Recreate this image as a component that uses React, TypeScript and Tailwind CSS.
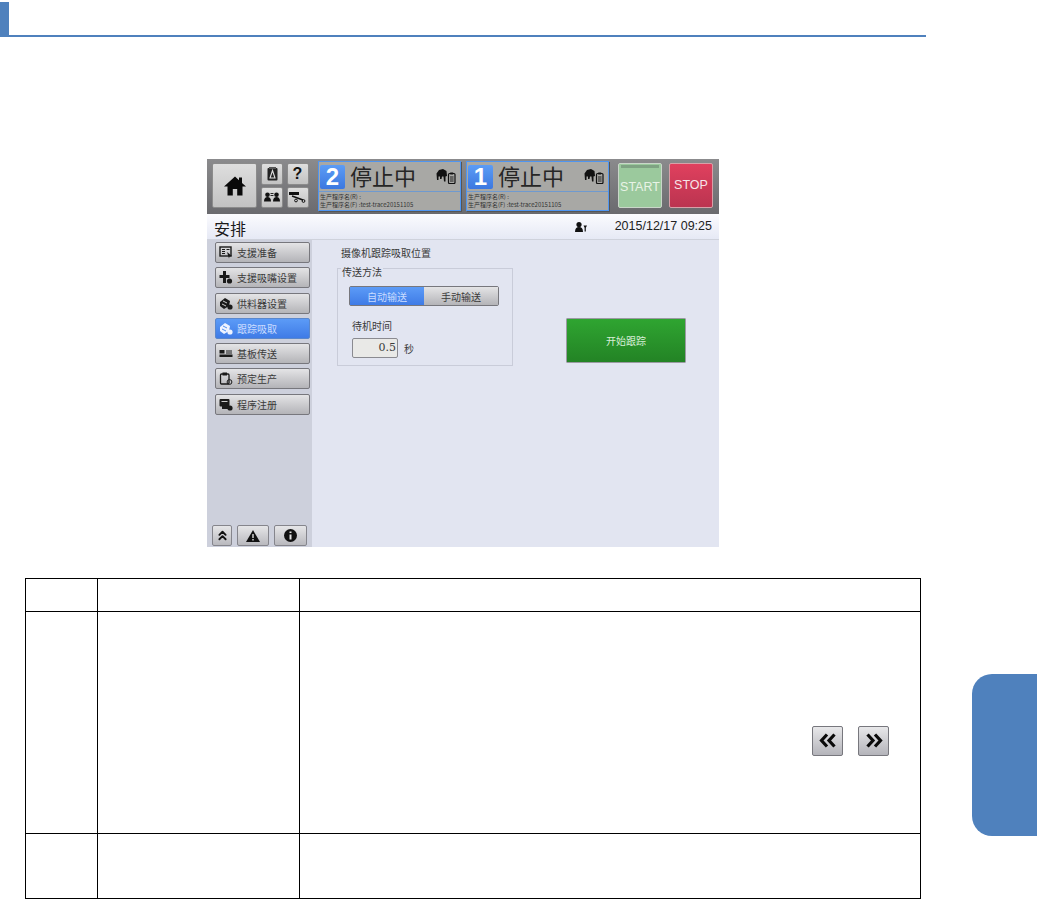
import React from "react";
import { ChevronsUp } from "lucide-react";

const cjk = "font-['Noto_Sans_CJK_SC','Noto_Sans',sans-serif]";

const HomeIcon = () => (
  <svg width="22" height="20" viewBox="0 0 22 20"><path d="M11 0.5 L15 4.2 L15 1.5 L18 1.5 L18 7 L22 10.5 L18.5 10.5 L18.5 19.5 L13.2 19.5 L13.2 13 L8.8 13 L8.8 19.5 L3.5 19.5 L3.5 10.5 L0 10.5 Z" fill="#0a0a0a" /></svg>
);

const MachineIcon = () => (
  <svg width="20" height="15" viewBox="0 0 20 15">
    <path d="M0.5 4.5 L3 1 L7 0 L10.5 2 L11 7 L9.5 7.5 L9.5 12.5 L8 12.5 L7.5 7.5 L6 7.5 L5.5 10 L4 10 L4 7.5 L2.5 7.5 L2.5 11 L1 11 Z" fill="#111" />
    <rect x="12.5" y="4.5" width="6.5" height="10" rx="1" fill="none" stroke="#111" strokeWidth="1.2" />
    <rect x="14.2" y="3.5" width="3" height="2" fill="#111" />
    <path d="M14 8h3.6M14 10h3.6M14 12h3.6" stroke="#111" strokeWidth="0.9" />
  </svg>
);

const PersonsIcon = () => (
  <svg width="16" height="10" viewBox="0 0 16 10">
    <circle cx="3.5" cy="2.7" r="2.3" fill="#111" /><path d="M0 9.5 Q0 5 3.5 5 Q7 5 7 9.5Z" fill="#111" />
    <circle cx="12.5" cy="2.7" r="2.3" fill="#111" /><path d="M9 9.5 Q9 5 12.5 5 Q16 5 16 9.5Z" fill="#111" />
    <path d="M6.5 1.5h3M6.5 3.5h3" stroke="#111" strokeWidth="0.9" />
  </svg>
);

const ConveyorIcon = () => (
  <svg width="17" height="12" viewBox="0 0 17 12">
    <rect x="0" y="1" width="10" height="3" fill="#111" />
    <path d="M3 5 L14 9" stroke="#111" strokeWidth="1.4" />
    <circle cx="7" cy="9.5" r="1.4" fill="none" stroke="#111" />
    <circle cx="14.5" cy="10" r="1.4" fill="none" stroke="#111" />
  </svg>
);

const BookAIcon = () => (
  <svg width="11" height="14" viewBox="0 0 11 14">
    <rect x="0.5" y="1" width="10" height="12.5" rx="1" fill="#222" />
    <rect x="2" y="0" width="7" height="2" fill="#555" />
    <path d="M5.5 3.5 L8 11 H3 Z" fill="none" stroke="#ddd" strokeWidth="1.1" />
  </svg>
);

const UserKeyIcon = () => (
  <svg width="12" height="10" viewBox="0 0 12 10">
    <circle cx="4" cy="2.6" r="2.6" fill="#111" />
    <path d="M0 10 Q0 5 4 5 Q8 5 8 10Z" fill="#111" />
    <path d="M8.5 3.5 L12 3.5 L10.8 5.8 L10.8 9.5 L9.6 9.5 L9.6 5.8Z" fill="#111" />
  </svg>
);

const DoubleChevron = ({ dir }: { dir: "left" | "right" }) => (
  <svg width="18" height="15" viewBox="0 0 18 15">
    <path
      d={dir === "left" ? "M8 1.5 L2.5 7.5 L8 13.5 M15.5 1.5 L10 7.5 L15.5 13.5" : "M2.5 1.5 L8 7.5 L2.5 13.5 M10 1.5 L15.5 7.5 L10 13.5"}
      fill="none"
      stroke="#0a0a0a"
      strokeWidth="3.2"
    />
  </svg>
);

const MenuGlyph = ({ kind, light }: { kind: string; light?: boolean }) => {
  const c = light ? "#eef3ff" : "#1a1a1a";
  return (
    <svg width="14" height="13" viewBox="0 0 14 13" className="shrink-0">
      {kind === "list" && (
        <>
          <rect x="1" y="1" width="11" height="9" fill="none" stroke={c} strokeWidth="1.4" />
          <path d="M3 3.5h3M3 5.5h3M3 7.5h3M7.5 3.5h3" stroke={c} />
          <path d="M8 6 L13 10 L10.5 10.5 L10 12.5Z" fill={c} />
        </>
      )}
      {kind === "nozzle" && (
        <>
          <rect x="4" y="0" width="3" height="12" fill={c} />
          <rect x="0.5" y="4" width="10" height="3" fill={c} />
          <circle cx="10.5" cy="10" r="2.6" fill={c} />
        </>
      )}
      {kind === "feeder" && (
        <>
          <path d="M1 5 L6 1 L11 4 L10 9 L5 12 L1 9Z" fill={c} />
          <path d="M4 4l4 2M3 7l4 2" stroke={light ? "#4f8ef0" : "#ccc"} />
          <circle cx="11" cy="10" r="2.6" fill={c} />
        </>
      )}
      {kind === "board" && (
        <>
          <rect x="0.5" y="3" width="5" height="3.5" fill={c} />
          <rect x="0.5" y="7.5" width="13" height="2.5" fill={c} />
          <path d="M7 4h6M7 6h6" stroke={c} />
        </>
      )}
      {kind === "clip" && (
        <>
          <rect x="1.5" y="2" width="8.5" height="10" rx="1" fill="none" stroke={c} strokeWidth="1.3" />
          <rect x="3.5" y="0.5" width="4.5" height="3" fill={c} />
          <circle cx="10.5" cy="10" r="2.4" fill="none" stroke={c} />
        </>
      )}
      {kind === "prog" && (
        <>
          <rect x="0.5" y="1" width="10" height="7.5" rx="1" fill={c} />
          <rect x="3" y="6" width="7" height="5" fill={c} />
          <path d="M2.5 3.5h6" stroke="#ccc" />
          <circle cx="11" cy="10" r="2.6" fill={c} />
        </>
      )}
    </svg>
  );
};

const menu = [
  { label: "支援准备", kind: "list" },
  { label: "支援吸嘴设置", kind: "nozzle" },
  { label: "供料器设置", kind: "feeder" },
  { label: "跟踪吸取", kind: "feeder", active: true },
  { label: "基板传送", kind: "board" },
  { label: "预定生产", kind: "clip" },
  { label: "程序注册", kind: "prog" },
];

const TopButton = ({ children, className = "" }: { children: React.ReactNode; className?: string }) => (
  <div className={`flex items-center justify-center rounded-[2px] border border-[#8b8b8b] bg-linear-to-b from-[#dedede] to-[#c2c2c2] ${className}`}>{children}</div>
);

const StatusPanel = ({ num }: { num: string }) => (
  <div className="w-[143px] h-[50px] flex flex-col border border-[#4f95f0] bg-[#a8a8a5] shadow-[1px_1px_0_#555]">
    <div className="h-[30px] flex items-center pl-[1px] pr-[4px] border-b border-[#6f9ad0]">
      <div className="w-[25px] h-[24px] rounded-[2px] bg-linear-to-b from-[#5c9cf5] to-[#3c78e0] text-white text-[24px] font-bold font-['Liberation_Sans',sans-serif] flex items-center justify-center">{num}</div>
      <span className={`ml-[5px] -mt-[3px] text-[22px] leading-none text-[#262626] ${cjk}`}>停止中</span>
      <span className="ml-auto"><MachineIcon /></span>
    </div>
    <div className={`pl-[1px] pt-[1px] text-[6px] leading-[7.5px] text-[#333] ${cjk}`}>
      <div>生产程序名(R) :</div>
      <div>生产程序名(F) :test-trace20151105</div>
    </div>
  </div>
);

const MenuButton = ({ label, kind, active }: { label: string; kind: string; active?: boolean }) => (
  <div className={`h-[21px] w-[95px] flex items-center pl-[3px] gap-[4px] rounded-[2px] border text-[10px] ${cjk} ${active ? "border-[#5a87cc] bg-linear-to-b from-[#5c9bf7] to-[#3f7be6] text-[#c9dcff]" : "border-[#77777d] bg-linear-to-b from-[#e4e4e6] to-[#b4b4b8] text-[#3a3a3a]"}`}>
    <MenuGlyph kind={kind} light={active} />
    <span>{label}</span>
  </div>
);

const SmallBottom = ({ children, className = "" }: { children: React.ReactNode; className?: string }) => (
  <div className={`h-[21px] flex items-center justify-center rounded-[2px] border border-[#85858c] bg-linear-to-b from-[#e6e6e8] to-[#b9b9be] ${className}`}>{children}</div>
);

const PageButton = ({ children }: { children: React.ReactNode }) => (
  <div className="w-[31px] h-[30px] flex items-center justify-center rounded-[2px] border border-[#77777d] bg-linear-to-b from-[#e8e8ea] to-[#b4b4ba]">{children}</div>
);

const Screen = () => (
  <div className="w-[512px] h-[388px] flex flex-col">
    <div className="h-[55px] flex items-start pl-[5px] pt-[4px] bg-linear-to-b from-[#8b8b8d] to-[#6a6a6e]">
      <TopButton className="w-[45px] h-[45px]"><HomeIcon /></TopButton>
      <div className="ml-[4px] grid grid-cols-2 gap-x-[4px] gap-y-[2px] w-[47px]">
        <TopButton className="w-[22px] h-[21.5px]"><BookAIcon /></TopButton>
        <TopButton className="w-[22px] h-[21.5px] text-[16px] font-bold text-[#111] font-['Liberation_Sans',sans-serif]">?</TopButton>
        <TopButton className="w-[22px] h-[21.5px]"><PersonsIcon /></TopButton>
        <TopButton className="w-[22px] h-[21.5px]"><ConveyorIcon /></TopButton>
      </div>
      <div className="ml-[10px] -mt-[2px] flex gap-[5px]">
        <StatusPanel num="2" />
        <StatusPanel num="1" />
      </div>
      <div className="ml-[9px] w-[44px] h-[45px] rounded-[2px] border border-[#c9d6c9] bg-[#9bc99d] flex flex-col items-center text-[12.5px] text-[#e8f3e6] font-['Liberation_Sans',sans-serif]">
        <div className="mt-[1px] w-[38px] h-[3px] bg-[#7fa383]" />
        <span className="mt-[10px]">START</span>
      </div>
      <div className="ml-[7px] w-[44px] h-[45px] rounded-[2px] border border-[#d8a0a8] bg-linear-to-b from-[#e0405e] to-[#bb3450] flex items-center justify-center text-[12.5px] text-[#f7e4e8] font-['Liberation_Sans',sans-serif]">STOP</div>
    </div>
    <div className="h-[26px] flex items-center pl-[7px] pr-[7px] bg-linear-to-b from-[#fbfbfe] to-[#e6e9f5] border-b border-[#cfd2dc]">
      <span className={`text-[16px] leading-none mt-[3px] text-[#1a1a1a] ${cjk}`}>安排</span>
      <span className="ml-auto"><UserKeyIcon /></span>
      <span className="ml-[28px] text-[12.5px] text-[#222] font-['Liberation_Sans',sans-serif]">2015/12/17 09:25</span>
    </div>
    <div className="flex-1 flex min-h-0">
      <div className="w-[105px] flex flex-col bg-[#cdd0dc]">
        <div className="pl-[8px] pt-[2px] flex flex-col gap-[4.3px]">
          {menu.map((m) => (
            <MenuButton key={m.label} {...m} />
          ))}
        </div>
        <div className="mt-auto mb-[1px] pl-[5px] flex gap-[5px]">
          <SmallBottom className="w-[20px]"><ChevronsUp size={15} strokeWidth={3} color="#111" /></SmallBottom>
          <SmallBottom className="w-[32px]">
            <svg width="14" height="12" viewBox="0 0 14 12"><path d="M7 0 L14 12 H0 Z" fill="#111" /><path d="M7 4v4M7 9v1.5" stroke="#ddd" strokeWidth="1.4" /></svg>
          </SmallBottom>
          <SmallBottom className="w-[33px]">
            <svg width="13" height="13" viewBox="0 0 13 13"><circle cx="6.5" cy="6.5" r="6.5" fill="#111" /><path d="M6.5 5.5v5M6.5 2.5v1.6" stroke="#e6e6e6" strokeWidth="2" /></svg>
          </SmallBottom>
        </div>
      </div>
      <div className={`flex-1 bg-[#e2e5f1] pl-[25px] text-[10px] text-[#3a3a3a] ${cjk}`}>
        <div className="pl-[4px] pt-[6px] leading-[14px]">摄像机跟踪吸取位置</div>
        <div className="flex items-start mt-[5px]">
          <fieldset className="w-[176px] h-[101px] border border-[#c9ccd9] pl-[11px]">
            <legend className="-ml-[8px] px-[1px] h-[6px] leading-[10px] translate-y-[2px]">传送方法</legend>
            <div className="mt-[15px] w-[150px] h-[20px] flex rounded-[2px] border border-[#77777d] text-[10px]">
              <div className="w-[74px] flex items-center justify-center bg-linear-to-b from-[#5c9bf7] to-[#3f7be6] text-[#c9dcff]">自动输送</div>
              <div className="flex-1 flex items-center justify-center bg-linear-to-b from-[#e4e4e6] to-[#b4b4b8]">手动输送</div>
            </div>
            <div className="mt-[13px] ml-[3px] leading-[14px]">待机时间</div>
            <div className="mt-[5px] ml-[3px] flex items-center gap-[6px]">
              <div className="w-[46px] h-[20px] flex items-center justify-end pr-[1px] rounded-[2px] border border-[#8a8a90] bg-[#e9e9e7] text-[11px] font-['DejaVu_Serif',serif]">0.5</div>
              <span>秒</span>
            </div>
          </fieldset>
          <div className="ml-[53px] mt-[53px] w-[120px] h-[45px] flex items-center justify-center rounded-[1px] border border-[#9a9aa2] bg-linear-to-b from-[#2fa531] to-[#238325] text-[#d8eed8]">开始跟踪</div>
        </div>
      </div>
    </div>
  </div>
);

export default function App() {
  return (
    <div className="relative w-[1037px] h-[899px] overflow-hidden bg-white">
      <div className="mt-[2px] w-[926px] h-[35px] border-b-2 border-[#4f81bd]">
        <div className="w-[9px] h-full bg-[#4f81bd]" />
      </div>
      <div className="ml-[207px] mt-[122px]">
        <Screen />
      </div>
      <table className="ml-[25px] mt-[31px] w-[895px] table-fixed border-collapse">
        <colgroup>
          <col className="w-[72px]" />
          <col className="w-[202px]" />
          <col className="w-[621px]" />
        </colgroup>
        <tbody>
          <tr className="h-[33px]">
            <td className="border border-black" />
            <td className="border border-black" />
            <td className="border border-black" />
          </tr>
          <tr className="h-[222px]">
            <td className="border border-black" />
            <td className="border border-black" />
            <td className="border border-black">
              <div className="flex justify-end gap-[15px] pr-[31px] pt-[36px]">
                <PageButton><DoubleChevron dir="left" /></PageButton>
                <PageButton><DoubleChevron dir="right" /></PageButton>
              </div>
            </td>
          </tr>
          <tr className="h-[65px]">
            <td className="border border-black" />
            <td className="border border-black" />
            <td className="border border-black" />
          </tr>
        </tbody>
      </table>
      <div className="absolute right-0 top-[674px] w-[65px] h-[162px] rounded-l-[20px] bg-[#4f81bd]" />
    </div>
  );
}
